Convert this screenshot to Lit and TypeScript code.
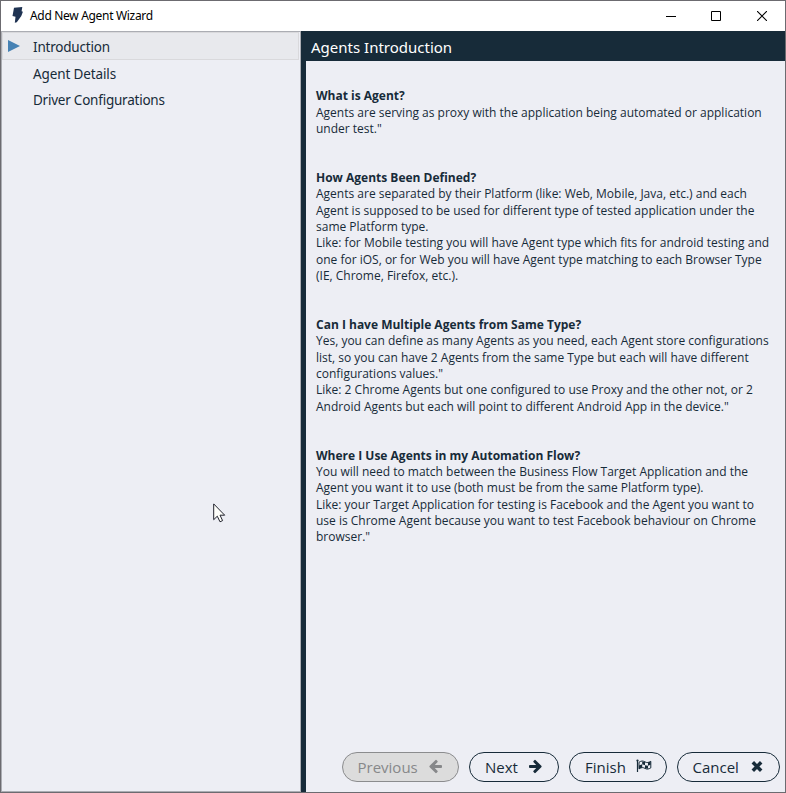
import { LitElement, html, css, svg } from "lit";
import { customElement } from "lit/decorators.js";

const steps = [
  { label: "Introduction", cls: "step current s1" },
  { label: "Agent Details", cls: "step s2" },
  { label: "Driver Configurations", cls: "step s3" },
];

const sections = [
  {
    title: "What is Agent?",
    lines: [
      "Agents are serving as proxy with the application being automated or application",
      'under test."',
    ],
  },
  {
    title: "How Agents Been Defined?",
    lines: [
      "Agents are separated by their Platform (like: Web, Mobile, Java, etc.) and each",
      "Agent is supposed to be used for different type of tested application under the",
      "same Platform type.",
      "Like: for Mobile testing you will have Agent type which fits for android testing and",
      "one for iOS, or for Web you will have Agent type matching to each Browser Type",
      "(IE, Chrome, Firefox, etc.).",
    ],
  },
  {
    title: "Can I have Multiple Agents from Same Type?",
    lines: [
      "Yes, you can define as many Agents as you need, each Agent store configurations",
      "list, so you can have 2 Agents from the same Type but each will have different",
      'configurations values."',
      "Like: 2 Chrome Agents but one configured to use Proxy and the other not, or 2",
      'Android Agents but each will point to different Android App in the device."',
    ],
  },
  {
    title: "Where I Use Agents in my Automation Flow?",
    lines: [
      "You will need to match between the Business Flow Target Application and the",
      "Agent you want it to use (both must be from the same Platform type).",
      "Like: your Target Application for testing is Facebook and the Agent you want to",
      "use is Chrome Agent because you want to test Facebook behaviour on Chrome",
      'browser."',
    ],
  },
];

const arrowRight = svg`<path fill="currentColor" d="M.9 6h6.300L4.600 3.300a1 1 0 0 1 0-1.400l.7-.7a1 1 0 0 1 1.400 0l5.600 5.600a1 1 0 0 1 0 1.400l-5.600 5.600a1 1 0 0 1-1.400 0l-.7-.7a1 1 0 0 1 0-1.400L7.200 9H.9a.9.900 0 0 1-.9-.9V6.900A.9.900 0 0 1 .9 6z"/>`;

const icons = {
  previous: html`<svg width="13" height="15" viewBox="0 0 13 15"><g transform="matrix(-1 0 0 1 13 0)">${arrowRight}</g></svg>`,
  next: html`<svg width="13" height="15" viewBox="0 0 13 15">${arrowRight}</svg>`,
  finish: html`<svg width="16" height="15" viewBox="0 0 16 15">
    <path d="M1.500 1v12" stroke="currentColor" stroke-width="1.200"/>
    <circle cx="1.500" cy="1.600" r="1.100" fill="currentColor"/>
    <path d="M3 3.300C5.500 1.500 7 1.800 9 2.900s3.600.7 5.800-.6v6.600C12.600 10.200 11 10.500 9 9.400S5.500 8.200 3 9.900z" fill="none" stroke="currentColor"/>
    <path d="M3 6.600 6.200 5.300V2.400L9 3v3.200l3 .6V3.400l2.600-1v3.400l-2.600 1v3L9 9.300V6.200L6.200 5.300v3.200L3 9.800z" fill="currentColor" fill-rule="evenodd"/>
  </svg>`,
  cancel: html`<svg width="12" height="15" viewBox="0 0 12 15"><path d="M1.800 3.300l8.400 8.400M10.200 3.300l-8.400 8.400" stroke="currentColor" stroke-width="3.500"/></svg>`,
};

const buttons = [
  { id: "previous", label: "Previous", icon: icons.previous },
  { id: "next", label: "Next", icon: icons.next },
  { id: "finish", label: "Finish", icon: icons.finish },
  { id: "cancel", label: "Cancel", icon: icons.cancel },
];

@customElement("app-root")
export class AppRoot extends LitElement {
  static styles = css`
    :host {
      display: flex;
      flex-direction: column;
      position: relative;
      box-sizing: border-box;
      width: 786px;
      height: 793px;
      border: 1px solid #6c6b70;
      background: #edeef4;
      color: #172b39;
      font-family: "Open Sans", sans-serif;
      overflow: hidden;
    }
    * { box-sizing: border-box; }
    svg { display: block; flex: none; }
    .titlebar {
      display: flex;
      flex: none;
      height: 30px;
      padding-left: 11px;
      background: #fff;
      color: #000;
      align-items: center;
    }
    .logo { margin-bottom: 2px; }
    .caption {
      flex: 1;
      margin-left: 7px;
      font: 12px/16px "Noto Sans", sans-serif;
      letter-spacing: -0.32px;
      white-space: nowrap;
    }
    .winbtn { width: 46px; display: flex; justify-content: center; }
    .winbtn:nth-of-type(2) { padding-left: 1px; }
    .main { display: flex; flex: 1; min-height: 0; }
    .nav {
      width: 300px;
      border: 1px solid #abadb3;
      font: 13.5px/20px "Noto Sans", sans-serif;
    }
    .step {
      display: flex;
      align-items: center;
      height: 26px;
      padding: 2px 0 0 31px;
      white-space: nowrap;
    }
    .current {
      height: 28px;
      margin: 0 1px 0 0;
      padding-left: 5px;
      border: 1px solid #d9d9dc;
      background: #e8e9ed;
    }
    .marker { margin: 0 13px 2px 0; }
    .s1 { letter-spacing: -0.2px; }
    .s2 { letter-spacing: -0.12px; }
    .s3 { letter-spacing: -0.23px; }
    .page {
      flex: 1;
      display: flex;
      flex-direction: column;
      border-left: 5px solid #172b39;
    }
    .heading {
      height: 30px;
      flex: none;
      padding: 6px 0 0 5px;
      background: #172b39;
      color: #fff;
      font: 15px/20px "Noto Sans", sans-serif;
      white-space: nowrap;
    }
    .content {
      flex: 1;
      padding: 27.3px 0 0 10px;
      font-size: 12px;
      line-height: 16.33px;
      white-space: nowrap;
    }
    .section { margin-bottom: 32.66px; }
    .title { font-weight: 700; }
    .footer {
      display: flex;
      justify-content: flex-end;
      gap: 10px;
      padding: 0 5px 10px 0;
    }
    .btn {
      display: flex;
      align-items: center;
      justify-content: space-between;
      height: 30px;
      padding: 0 16px 0 15px;
      border: 1px solid #172b39;
      border-radius: 15px;
      background: transparent;
      color: #172b39;
      font: 15px/20px "Open Sans", sans-serif;
      white-space: nowrap;
    }
    .btn svg { margin-bottom: 1px; }
    .previous { width: 117.5px; color: #87888a; background: #dcdcdc; border-color: #8b8c8e; }
    .next { width: 90px; }
    .finish { width: 98px; padding-right: 14px; }
    .cancel { width: 103px; padding-right: 16px; padding-left: 14.5px; }
    .pointer { position: absolute; left: 212px; top: 501.5px; }
  `;

  render() {
    return html`
      <div class="titlebar">
        <svg class="logo" width="11" height="16" viewBox="0 0 11 16"><path fill="#1f3352" d="M2 .8 10.300 0 9.600 4.300l1.300.4-1.600 4.300-4.500 6.200-2 .6L3.500 9.700.5 9z"/></svg>
        <div class="caption">Add New Agent Wizard</div>
        <div class="winbtn"><svg width="10" height="11" viewBox="0 0 10 11"><path d="M0 5.500h10" stroke="#000"/></svg></div>
        <div class="winbtn"><svg width="10" height="10" viewBox="0 0 10 10"><path d="M.5.500h9v9h-9z" stroke="#000" fill="none"/></svg></div>
        <div class="winbtn"><svg width="10" height="10" viewBox="0 0 10 10"><path d="M0 0l10 10M10 0L0 10" stroke="#000" stroke-width="1.100"/></svg></div>
      </div>
      <div class="main">
        <div class="nav">
          ${steps.map(
            (s, i) => html`<div class=${s.cls}>
              ${i === 0
                ? html`<svg class="marker" width="12" height="12" viewBox="0 0 12 12"><path d="M0 0 12 6 0 12z" fill="#4682b4"/></svg>`
                : ""}
              <span>${s.label}</span>
            </div>`
          )}
        </div>
        <div class="page">
          <div class="heading">Agents Introduction</div>
          <div class="content">
            ${sections.map(
              (s) => html`<div class="section">
                <div class="title">${s.title}</div>
                ${s.lines.map((l) => html`<div>${l}</div>`)}
              </div>`
            )}
          </div>
          <div class="footer">
            ${buttons.map((b) => html`<button class="btn ${b.id}" ?disabled=${b.id === "previous"}><span>${b.label}</span>${b.icon}</button>`)}
          </div>
        </div>
      </div>
      <svg class="pointer" width="13" height="20" viewBox="0 0 13 20"><path d="M.7.900v15.800l3.600-3.500 2.700 5.600 2.600-1.200-2.600-5.400h4.700z" fill="#fffffb" stroke="#20222c"/></svg>
    `;
  }
}
